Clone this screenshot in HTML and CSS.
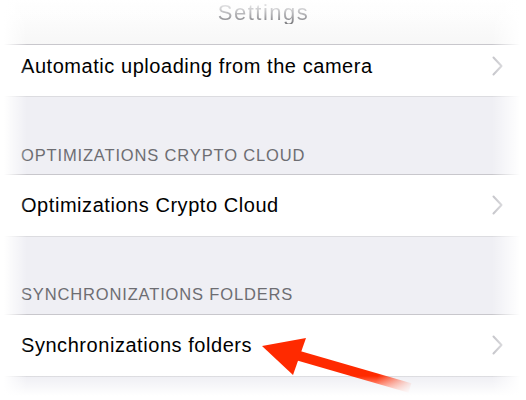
FILE: index.html
```html
<!DOCTYPE html>
<html>
<head>
<meta charset="utf-8">
<link rel="stylesheet" href="styles.css">
</head>
<body>
<div class="screen">
  <div class="navbar"><span class="title">Settings</span></div>
  <div class="row first">
    <span class="label">Automatic uploading from the camera</span>
    <svg class="chev" width="11" height="20" viewBox="0 0 11 20"><path d="M1.5 1.5 L9.5 10 L1.5 18.5" fill="none" stroke="#c4c4c9" stroke-width="2" stroke-linecap="round" stroke-linejoin="round"/></svg>
  </div>
  <div class="section">OPTIMIZATIONS CRYPTO CLOUD</div>
  <div class="row">
    <span class="label">Optimizations Crypto Cloud</span>
    <svg class="chev" width="11" height="20" viewBox="0 0 11 20"><path d="M1.5 1.5 L9.5 10 L1.5 18.5" fill="none" stroke="#c4c4c9" stroke-width="2" stroke-linecap="round" stroke-linejoin="round"/></svg>
  </div>
  <div class="section">SYNCHRONIZATIONS FOLDERS</div>
  <div class="row">
    <span class="label">Synchronizations folders</span>
    <svg class="chev" width="11" height="20" viewBox="0 0 11 20"><path d="M1.5 1.5 L9.5 10 L1.5 18.5" fill="none" stroke="#c4c4c9" stroke-width="2" stroke-linecap="round" stroke-linejoin="round"/></svg>
  </div>
  <div class="footer"></div>
  <svg class="arrow" width="526" height="400" viewBox="0 0 526 400">
    <defs>
      <linearGradient id="shaft" gradientUnits="userSpaceOnUse" x1="300" y1="356" x2="410" y2="388">
        <stop offset="0" stop-color="#ff2a00"/>
        <stop offset="0.7" stop-color="#ff2a00"/>
        <stop offset="1" stop-color="#ff2a00" stop-opacity="0.1"/>
      </linearGradient>
    </defs>
    <line x1="296" y1="355" x2="410" y2="388" stroke="url(#shaft)" stroke-width="10"/>
    <polygon points="262,346 306,338 293,375" fill="#ff2a00"/>
  </svg>
  <div class="vignette"></div>
</div>
</body>
</html>
```

FILE: styles.css
```css
html, body {
  margin: 0;
  padding: 0;
  background: #ffffff;
}
.screen {
  position: relative;
  width: 526px;
  height: 400px;
  overflow: hidden;
  background: #efeff4;
  font-family: "Liberation Sans", Arial, sans-serif;
}
.navbar {
  height: 44px;
  border-bottom: 1px solid #c8c7cc;
  background: linear-gradient(to bottom, #ffffff 0, #f7f7f7 100%);
  display: flex;
  justify-content: center;
  align-items: flex-start;
  overflow: hidden;
}
.title {
  font-size: 22px;
  line-height: 22px;
  margin-top: 2px;
  letter-spacing: 1.5px;
  padding-left: 1px;
  color: transparent;
  background: linear-gradient(to bottom, #d6d6d8 0, #a4a4a8 45%, #6a6a6e 100%);
  -webkit-background-clip: text;
  background-clip: text;
}
.row {
  background: #ffffff;
  border-bottom: 1px solid #dcdce0;
  display: flex;
  align-items: center;
  justify-content: space-between;
  padding: 0 23px 0 21px;
  box-sizing: border-box;
  height: 62px;
}
.row.first {
  height: 52px;
  padding-bottom: 9px;
}
.label {
  font-size: 20px;
  color: #000000;
  letter-spacing: 0.55px;
}
.chev {
  display: block;
  margin-top: -1px;
}
.section {
  height: 78px;
  box-sizing: border-box;
  border-bottom: 1px solid #c8c7cc;
  display: flex;
  align-items: flex-end;
  padding: 0 0 9px 21px;
  font-size: 16.5px;
  line-height: 20px;
  letter-spacing: 0.85px;
  color: #6d6d72;
}
.section + .row + .section {
  padding-bottom: 10px;
}
.footer {
  height: 30px;
  background: #efeff4;
}
.arrow {
  position: absolute;
  left: 0;
  top: 0;
}
.vignette {
  position: absolute;
  inset: 0;
  pointer-events: none;
  background:
    linear-gradient(to right, #ffffff 4px, rgba(255,255,255,0) 27px),
    linear-gradient(to left, #ffffff 6px, rgba(255,255,255,0) 34px),
    linear-gradient(to top, #ffffff 4px, rgba(255,255,255,0) 24px),
    linear-gradient(to bottom, rgba(255,255,255,0.55) 0, rgba(255,255,255,0) 28px);
}
```
